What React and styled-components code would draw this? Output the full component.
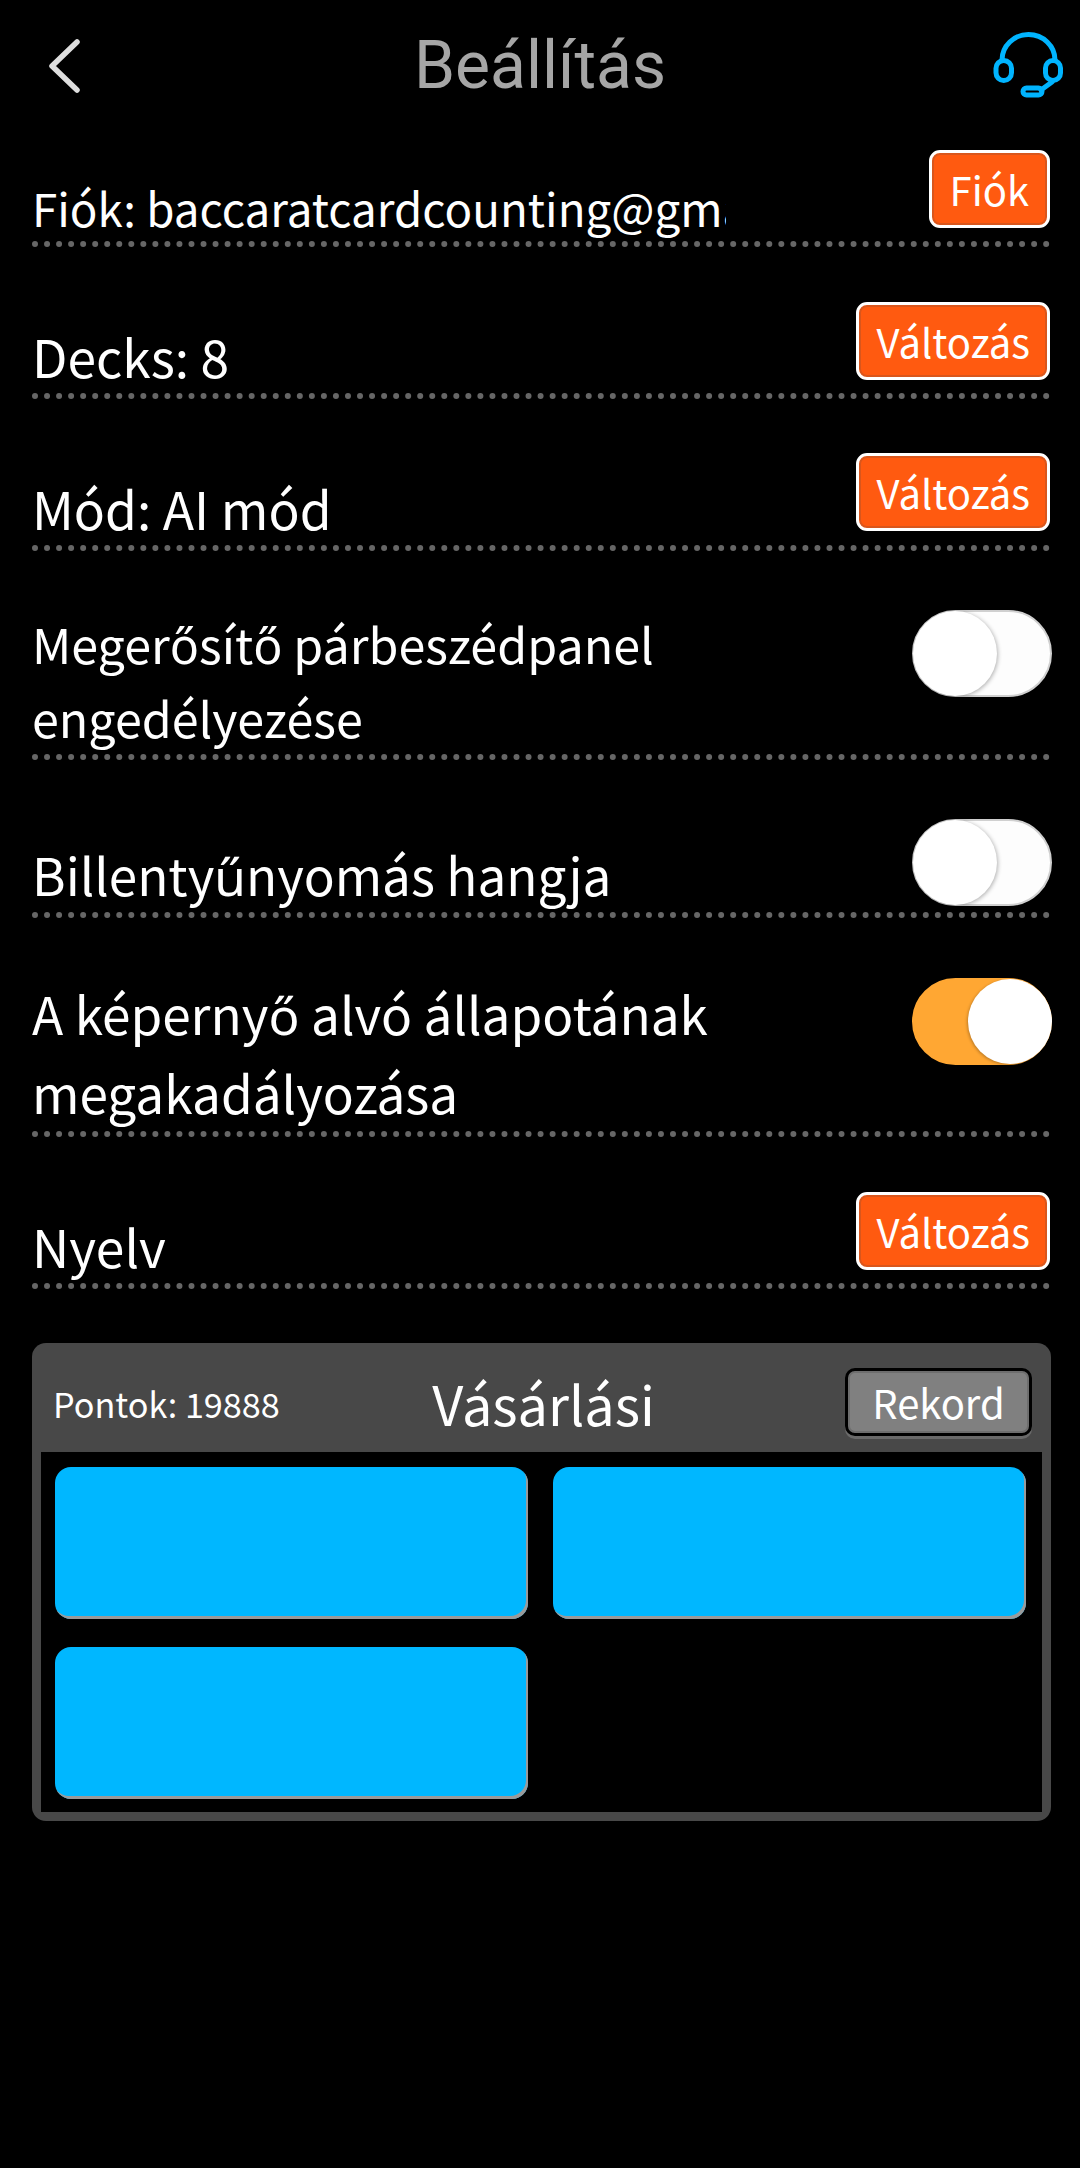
import React from 'react'
import styled, { createGlobalStyle } from 'styled-components'

const Global = createGlobalStyle`
html, body {
  margin: 0;
  padding: 0;
  background: #000;
}
* { box-sizing: border-box; }
`

const Page = styled.div`
width: 1080px;
height: 2168px;
background: #000;
color: #fff;
font-family: "Noto Sans CJK SC", "Noto Sans", sans-serif;
overflow: hidden;
`

const Header = styled.header`
height: 98px;
padding: 31px 16px 0 16px;
display: grid;
grid-template-columns: 1fr auto 1fr;
align-items: start;
`

const Back = styled.svg`
width: 36px;
height: 56px;
margin: 7px 0 0 31px;
`

const Title = styled.h1`
margin: 0;
font-family: Roboto, sans-serif;
font-weight: 400;
font-size: 66px;
line-height: 70px;
color: #a6a6a6;
`

const Support = styled.svg`
justify-self: end;
width: 74px;
height: 70px;
margin-top: -1px;
`

const List = styled.div`
padding: 0 30px 0 32px;
`

const Row = styled.div`
height: ${props => props.h}px;
padding-top: ${props => props.top}px;
display: flex;
justify-content: space-between;
align-items: flex-start;
border-bottom: 6px dotted #666;
`

const Label = styled.div`
align-self: flex-end;
width: ${props => props.w || 'auto'};
font-size: ${props => props.size}px;
line-height: ${props => props.lh || 75}px;
white-space: ${props => props.wrap ? 'normal' : 'nowrap'};
overflow: hidden;
`

const OrangeBtn = styled.button`
height: 78px;
padding: 0 ${props => props.pad || 17}px;
font: inherit;
font-size: 40px;
line-height: 66px;
color: #fff;
background: #ff5a10;
border: 3px solid #fff;
border-radius: 11px;
box-shadow: inset 0 0 0 2px #d9561c;
`

const Toggle = styled.div`
position: relative;
width: 140px;
height: 87px;
margin-right: -2px;
border-radius: 44px;
background: ${props => props.on ? '#ffa733' : '#fdfdfd'};
border: 2px solid ${props => props.on ? '#ffa733' : '#d0d0d0'};
`

const Knob = styled.span`
position: absolute;
top: -1px;
left: ${props => props.on ? '54px' : '-1px'};
width: 84px;
height: 85px;
border-radius: 50%;
background: #fff;
box-shadow: ${props => props.on ? '-1px 1px 3px rgba(0,0,0,.25)' : '1px 1px 4px rgba(0,0,0,.3)'};
`

const Panel = styled.section`
margin: 54px 29px 0 32px;
height: 478px;
background: #484848;
border-radius: 14px;
padding: 0 9px 9px;
display: flex;
flex-direction: column;
`

const PanelHead = styled.div`
height: 109px;
padding: 26px 0 0 12px;
display: grid;
grid-template-columns: 1fr auto 1fr;
align-items: center;
`

const Points = styled.div`
font-size: 34.2px;
line-height: 50px;
margin-top: -16px;
`

const PanelTitle = styled.div`
font-size: 54px;
line-height: 70px;
margin: -16px 8px 0 0;
`

const Record = styled.button`
justify-self: end;
width: 187px;
height: 68px;
margin: -18px 10px 0 0;
padding: 0;
font: inherit;
font-size: 40px;
line-height: 58px;
color: #fff;
background: #808080;
border: 3px solid #000;
border-radius: 10px;
box-shadow: inset 0 0 0 2px #6e6e6e, 0 3px 0 #6a6a6a;
`

const Packs = styled.div`
flex: 1;
background: #000;
padding: 15px 17px 0 14px;
display: grid;
grid-template-columns: 473px 473px;
grid-auto-rows: 152px;
column-gap: 25px;
row-gap: 28px;
`

const Pack = styled.div`
background: #00b7ff;
border-radius: 16px;
box-shadow: inset -2px -3px 0 #9a9a9a;
`

const rows = [
  { h: 149, top: 52, size: 45.7, lh: 68, label: 'Fiók: baccaratcardcounting@gmail.com', w: '694px', btn: 'Fiók', pad: 18 },
  { h: 152, top: 55, size: 51.5, label: 'Decks: 8', btn: 'Változás' },
  { h: 152, top: 54, size: 51.5, label: 'Mód: AI mód', btn: 'Változás' },
  { h: 209, top: 59, size: 48.4, lh: 73.5, label: 'Megerősítő párbeszédpanel engedélyezése', w: '700px', wrap: true, toggle: false },
  { h: 158, top: 59, size: 51.2, label: 'Billentyűnyomás hangja', toggle: false },
  { h: 219, top: 60, size: 51.3, lh: 79, label: 'A képernyő alvó állapotának megakadályozása', w: '760px', wrap: true, toggle: true },
  { h: 152, top: 55, size: 51.5, label: 'Nyelv', btn: 'Változás' },
]

const App = () => {
  return (
    <Page>
      <Global />
      <Header>
        <Back viewBox="0 0 36 56" fill="none" stroke="#dedede" strokeWidth="5.5" strokeLinecap="round" strokeLinejoin="round">
          <path d="M30 4 L5 28 L30 52" />
        </Back>
        <Title>Beállítás</Title>
        <Support viewBox="0 0 74 70" fill="none" stroke="#00b4ff" strokeWidth="5" strokeLinecap="round" strokeLinejoin="round">
          <path d="M12 30 A26.5 25.5 0 0 1 65 30" />
          <rect x="6" y="30.5" width="15.5" height="20" rx="7.7" />
          <rect x="55.5" y="30.5" width="15" height="20" rx="7.5" />
          <path d="M62 52 L51 60" />
          <rect x="33" y="58" width="19" height="7" rx="3.5" />
        </Support>
      </Header>
      <List>
        {rows.map(r => (
          <Row key={r.label} h={r.h} top={r.top}>
            <Label w={r.w} wrap={r.wrap} size={r.size} lh={r.lh}>{r.label}</Label>
            {r.btn && <OrangeBtn pad={r.pad}>{r.btn}</OrangeBtn>}
            {r.toggle !== undefined && (
              <Toggle on={r.toggle}>
                <Knob on={r.toggle} />
              </Toggle>
            )}
          </Row>
        ))}
      </List>
      <Panel>
        <PanelHead>
          <Points>Pontok: 19888</Points>
          <PanelTitle>Vásárlási</PanelTitle>
          <Record>Rekord</Record>
        </PanelHead>
        <Packs>
          <Pack />
          <Pack />
          <Pack />
        </Packs>
      </Panel>
    </Page>
  )
}

export default App
